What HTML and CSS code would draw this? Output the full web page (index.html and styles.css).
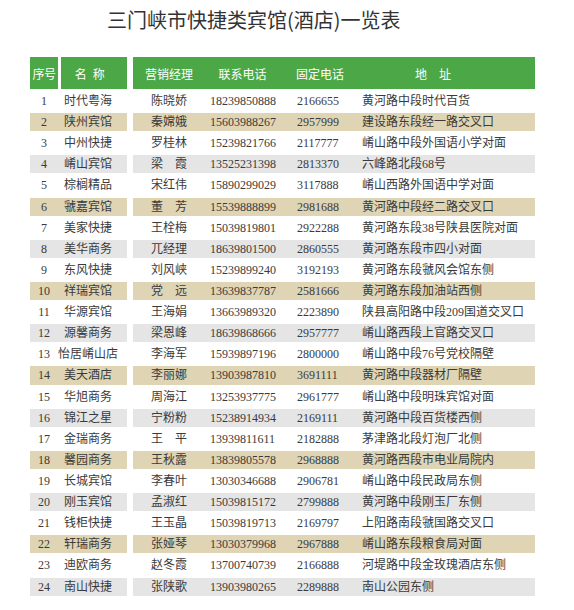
FILE: index.html
```html
<!DOCTYPE html>
<html lang="zh">
<head>
<meta charset="utf-8">
<title>三门峡市快捷类宾馆(酒店)一览表</title>
<link rel="stylesheet" href="styles.css">
</head>
<body>
<div class="page">
  <h1 class="title">三门峡市快捷类宾馆(酒店)一览表</h1>
  <div class="table">
    <div class="row hd">
      <div class="left">
        <div class="hno">序号</div>
        <div class="hname">名&ensp;称</div>
      </div>
      <div class="right">
        <div class="hmgr">营销经理</div>
        <div class="hphone">联系电话</div>
        <div class="hfix">固定电话</div>
        <div class="haddr">地&emsp;址</div>
      </div>
    </div>

    <div class="row"><div class="left"><div class="no">1</div><div class="name">时代粤海</div></div><div class="right"><div class="mgr">陈晓娇</div><div class="phone">18239850888</div><div class="fix">2166655</div><div class="addr">黄河路中段时代百货</div></div></div>
    <div class="row tan"><div class="left"><div class="no">2</div><div class="name">陕州宾馆</div></div><div class="right"><div class="mgr">秦嫦娥</div><div class="phone">15603988267</div><div class="fix">2957999</div><div class="addr">建设路东段经一路交叉口</div></div></div>
    <div class="row"><div class="left"><div class="no">3</div><div class="name">中州快捷</div></div><div class="right"><div class="mgr">罗桂林</div><div class="phone">15239821766</div><div class="fix">2117777</div><div class="addr">崤山路中段外国语小学对面</div></div></div>
    <div class="row gray"><div class="left"><div class="no">4</div><div class="name">崤山宾馆</div></div><div class="right"><div class="mgr">梁　霞</div><div class="phone">13525231398</div><div class="fix">2813370</div><div class="addr">六峰路北段68号</div></div></div>
    <div class="row"><div class="left"><div class="no">5</div><div class="name">棕榈精品</div></div><div class="right"><div class="mgr">宋红伟</div><div class="phone">15890299029</div><div class="fix">3117888</div><div class="addr">崤山西路外国语中学对面</div></div></div>
    <div class="row tan"><div class="left"><div class="no">6</div><div class="name">虢嘉宾馆</div></div><div class="right"><div class="mgr">董　芳</div><div class="phone">15539888899</div><div class="fix">2981688</div><div class="addr">黄河路中段经二路交叉口</div></div></div>
    <div class="row"><div class="left"><div class="no">7</div><div class="name">美家快捷</div></div><div class="right"><div class="mgr">王栓梅</div><div class="phone">15039819801</div><div class="fix">2922288</div><div class="addr">黄河路东段38号陕县医院对面</div></div></div>
    <div class="row gray"><div class="left"><div class="no">8</div><div class="name">美华商务</div></div><div class="right"><div class="mgr">兀经理</div><div class="phone">18639801500</div><div class="fix">2860555</div><div class="addr">黄河路东段市四小对面</div></div></div>
    <div class="row"><div class="left"><div class="no">9</div><div class="name">东风快捷</div></div><div class="right"><div class="mgr">刘风峡</div><div class="phone">15239899240</div><div class="fix">3192193</div><div class="addr">黄河路东段虢风会馆东侧</div></div></div>
    <div class="row tan"><div class="left"><div class="no">10</div><div class="name">祥瑞宾馆</div></div><div class="right"><div class="mgr">党　远</div><div class="phone">13639837787</div><div class="fix">2581666</div><div class="addr">黄河路东段加油站西侧</div></div></div>
    <div class="row"><div class="left"><div class="no">11</div><div class="name">华源宾馆</div></div><div class="right"><div class="mgr">王海娟</div><div class="phone">13663989320</div><div class="fix">2223890</div><div class="addr">陕县高阳路中段209国道交叉口</div></div></div>
    <div class="row gray"><div class="left"><div class="no">12</div><div class="name">源馨商务</div></div><div class="right"><div class="mgr">梁恩峰</div><div class="phone">18639868666</div><div class="fix">2957777</div><div class="addr">崤山路西段上官路交叉口</div></div></div>
    <div class="row"><div class="left"><div class="no">13</div><div class="name">怡居崤山店</div></div><div class="right"><div class="mgr">李海军</div><div class="phone">15939897196</div><div class="fix">2800000</div><div class="addr">崤山路中段76号党校隔壁</div></div></div>
    <div class="row tan"><div class="left"><div class="no">14</div><div class="name">美天酒店</div></div><div class="right"><div class="mgr">李丽娜</div><div class="phone">13903987810</div><div class="fix">3691111</div><div class="addr">黄河路中段器材厂隔壁</div></div></div>
    <div class="row"><div class="left"><div class="no">15</div><div class="name">华旭商务</div></div><div class="right"><div class="mgr">周海江</div><div class="phone">13253937775</div><div class="fix">2961777</div><div class="addr">崤山路中段明珠宾馆对面</div></div></div>
    <div class="row gray"><div class="left"><div class="no">16</div><div class="name">锦江之星</div></div><div class="right"><div class="mgr">宁粉粉</div><div class="phone">15238914934</div><div class="fix">2169111</div><div class="addr">黄河路中段百货楼西侧</div></div></div>
    <div class="row"><div class="left"><div class="no">17</div><div class="name">金瑞商务</div></div><div class="right"><div class="mgr">王　平</div><div class="phone">13939811611</div><div class="fix">2182888</div><div class="addr">茅津路北段灯泡厂北侧</div></div></div>
    <div class="row tan"><div class="left"><div class="no">18</div><div class="name">馨园商务</div></div><div class="right"><div class="mgr">王秋露</div><div class="phone">13839805578</div><div class="fix">2968888</div><div class="addr">黄河路西段市电业局院内</div></div></div>
    <div class="row"><div class="left"><div class="no">19</div><div class="name">长城宾馆</div></div><div class="right"><div class="mgr">李春叶</div><div class="phone">13030346688</div><div class="fix">2906781</div><div class="addr">崤山路中段民政局东侧</div></div></div>
    <div class="row gray"><div class="left"><div class="no">20</div><div class="name">刚玉宾馆</div></div><div class="right"><div class="mgr">孟淑红</div><div class="phone">15039815172</div><div class="fix">2799888</div><div class="addr">黄河路中段刚玉厂东侧</div></div></div>
    <div class="row"><div class="left"><div class="no">21</div><div class="name">钱柜快捷</div></div><div class="right"><div class="mgr">王玉晶</div><div class="phone">15039819713</div><div class="fix">2169797</div><div class="addr">上阳路南段虢国路交叉口</div></div></div>
    <div class="row tan"><div class="left"><div class="no">22</div><div class="name">轩瑞商务</div></div><div class="right"><div class="mgr">张娅琴</div><div class="phone">13030379968</div><div class="fix">2967888</div><div class="addr">崤山路东段粮食局对面</div></div></div>
    <div class="row"><div class="left"><div class="no">23</div><div class="name">迪欧商务</div></div><div class="right"><div class="mgr">赵冬霞</div><div class="phone">13700740739</div><div class="fix">2166888</div><div class="addr">河堤路中段金玫瑰酒店东侧</div></div></div>
    <div class="row gray"><div class="left"><div class="no">24</div><div class="name">南山快捷</div></div><div class="right"><div class="mgr">张陕歌</div><div class="phone">13903980265</div><div class="fix">2289888</div><div class="addr">南山公园东侧</div></div></div>
  </div>
</div>
</body>
</html>
```

FILE: styles.css
```css
html, body {
  margin: 0;
  padding: 0;
  background: #ffffff;
}

.page {
  width: 574px;
  padding-top: 10px;
}

.title {
  margin: 0 0 27px 0;
  padding-left: 107px;
  height: 20px;
  font-family: "Noto Sans CJK SC", "Noto Sans", sans-serif;
  font-weight: normal;
  font-size: 20px;
  line-height: 20px;
  color: #333333;
  white-space: nowrap;
}

.table {
  margin-left: 30px;
  width: 505px;
  display: flex;
  flex-direction: column;
  gap: 3px;
  font-family: "Liberation Serif", "Noto Sans CJK SC", serif;
  font-size: 12px;
  color: #3a3a3a;
}

.row {
  display: flex;
  height: 18.12px;
}

.left {
  width: 97px;
  display: flex;
}

.right {
  width: 402px;
  margin-left: 6px;
  display: flex;
}

.tan .left,
.tan .right {
  background: #dfd5b5;
}

.gray .left,
.gray .right {
  background: #e5e5e5;
}

.no, .name, .mgr, .phone, .fix, .addr {
  display: flex;
  align-items: center;
  line-height: 18px;
  white-space: nowrap;
}

.no {
  width: 28px;
  justify-content: center;
}

.name {
  width: 60px;
  justify-content: center;
}

.mgr {
  width: 72px;
  justify-content: center;
}

.phone {
  width: 87px;
  padding-left: 5px;
}

.fix {
  width: 65px;
}

.addr {
  flex: 1;
}

/* header */
.hd {
  height: 32px;
  font-family: "Noto Sans CJK SC", "Noto Sans", sans-serif;
  color: #ffffff;
}

.hd .left {
  gap: 2.5px;
}

.hno, .hname, .hmgr, .hphone, .hfix, .haddr {
  display: flex;
  align-items: center;
  justify-content: center;
  white-space: nowrap;
}

.hno {
  width: 28px;
  background: #4ca746;
  letter-spacing: -0.5px;
}

.hname {
  width: 66.5px;
  background: #4ca746;
  padding-right: 8px;
  box-sizing: border-box;
}

.hd .right {
  background: #4ca746;
}

.hmgr {
  width: 72px;
}

.hphone {
  width: 75px;
}

.hfix {
  width: 80px;
}

.haddr {
  width: 146px;
}
```
